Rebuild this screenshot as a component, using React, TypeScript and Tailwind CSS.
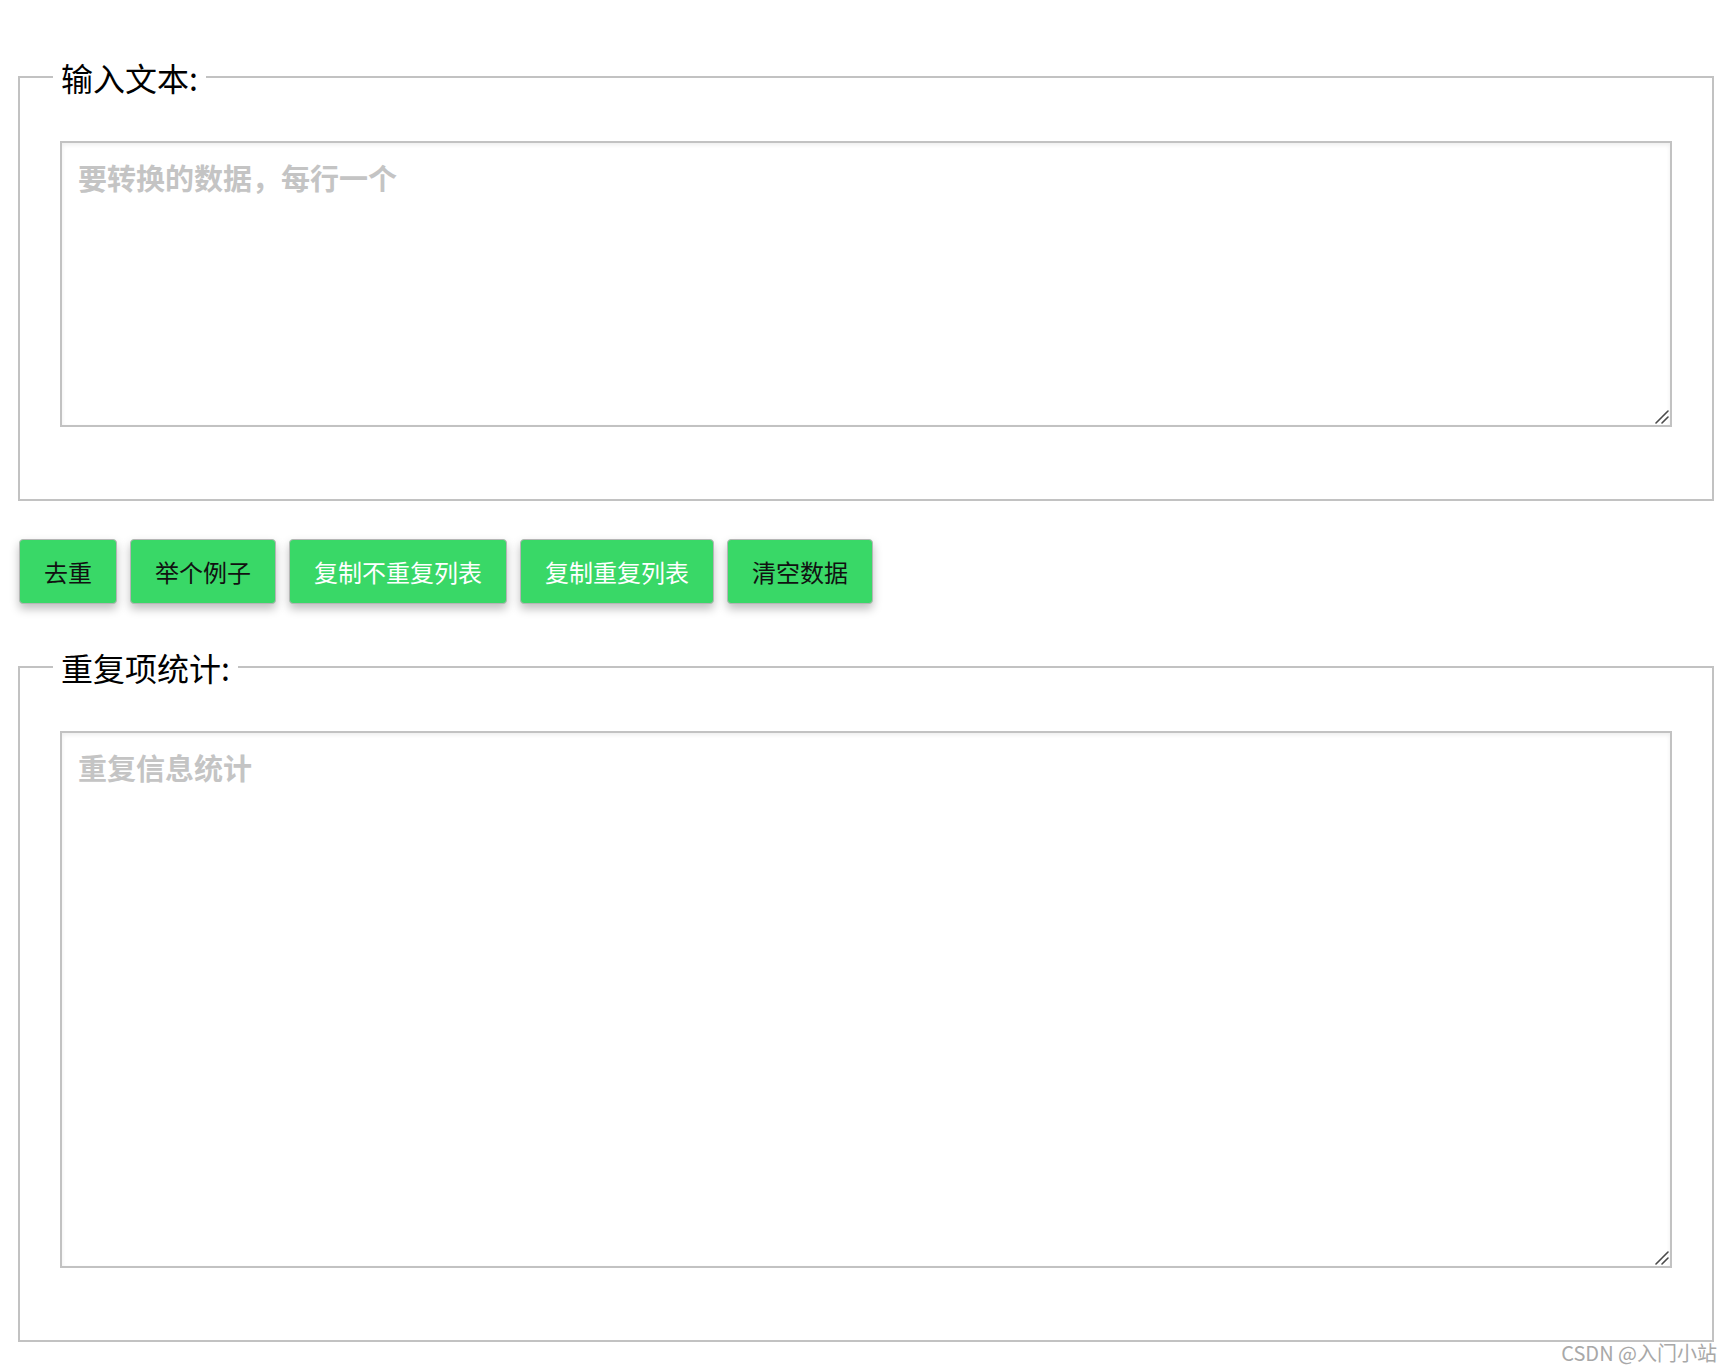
import { useState } from 'react';

const FONT = '"Noto Sans CJK SC", "Noto Sans", sans-serif';

const buttons = [
  { label: '去重', light: false },
  { label: '举个例子', light: false },
  { label: '复制不重复列表', light: true },
  { label: '复制重复列表', light: true },
  { label: '清空数据', light: false },
];

function Grip() {
  return (
    <svg className="absolute right-[3px] bottom-[3px] w-[14px] h-[14px] pointer-events-none" viewBox="0 0 14 14">
      <path d="M1 13 L13 1 M7 13 L13 7" stroke="#4a4a4a" strokeWidth="1.6" strokeLinecap="round" />
    </svg>
  );
}

function Panel({
  title,
  placeholder,
  height,
  value,
  onChange,
}: {
  title: string;
  placeholder: string;
  height: string;
  value: string;
  onChange: (v: string) => void;
}) {
  return (
    <fieldset className="border-2 border-[#c2c2c2] px-10 pb-[72px] m-0 min-w-0">
      <legend className="-ml-[7px] px-2 text-[32px] leading-[44px] text-black">{title}</legend>
      <div className={`relative mt-[42px] ${height}`}>
        <textarea
          className="block w-full h-full resize-none border-2 border-[#c2c2c2] bg-white px-4 py-[13px] text-[29px] leading-[42px] font-bold text-[#333] placeholder:text-[#c4c4c4] shadow-[inset_0_2px_4px_rgba(0,0,0,0.07)] outline-none"
          style={{ fontFamily: FONT }}
          placeholder={placeholder}
          value={value}
          onChange={(e) => onChange(e.target.value)}
        />
        <Grip />
      </div>
    </fieldset>
  );
}

export default function App() {
  const [input, setInput] = useState('');
  const [stats, setStats] = useState('');

  return (
    <div className="relative min-h-[1370px] bg-white px-[18px] pt-[55px]" style={{ fontFamily: FONT }}>
      {/* 输入 */}
      <Panel
        title="输入文本:"
        placeholder="要转换的数据，每行一个"
        height="h-[286px]"
        value={input}
        onChange={setInput}
      />

      {/* 操作按钮 */}
      <div className="flex items-center gap-[13px] mt-[38px] ml-px">
        {buttons.map((b) => (
          <button
            key={b.label}
            className={`h-[65px] px-[24px] rounded-[4px] border border-[#b5b5b5] bg-[#39d867] text-[24px] leading-none shadow-[0_5px_10px_rgba(0,0,0,0.25)] ${
              b.light ? 'text-white' : 'text-[#111]'
            }`}
          >
            {b.label}
          </button>
        ))}
      </div>

      {/* 统计 */}
      <div className="mt-[41px]">
        <Panel
          title="重复项统计:"
          placeholder="重复信息统计"
          height="h-[537px]"
          value={stats}
          onChange={setStats}
        />
      </div>

      <span className="absolute right-[15px] top-[1338px] text-[20px] text-[#a8a8a8] [text-shadow:0_0_2px_#fff,0_0_2px_#fff]">
        CSDN @入门小站
      </span>
    </div>
  );
}
